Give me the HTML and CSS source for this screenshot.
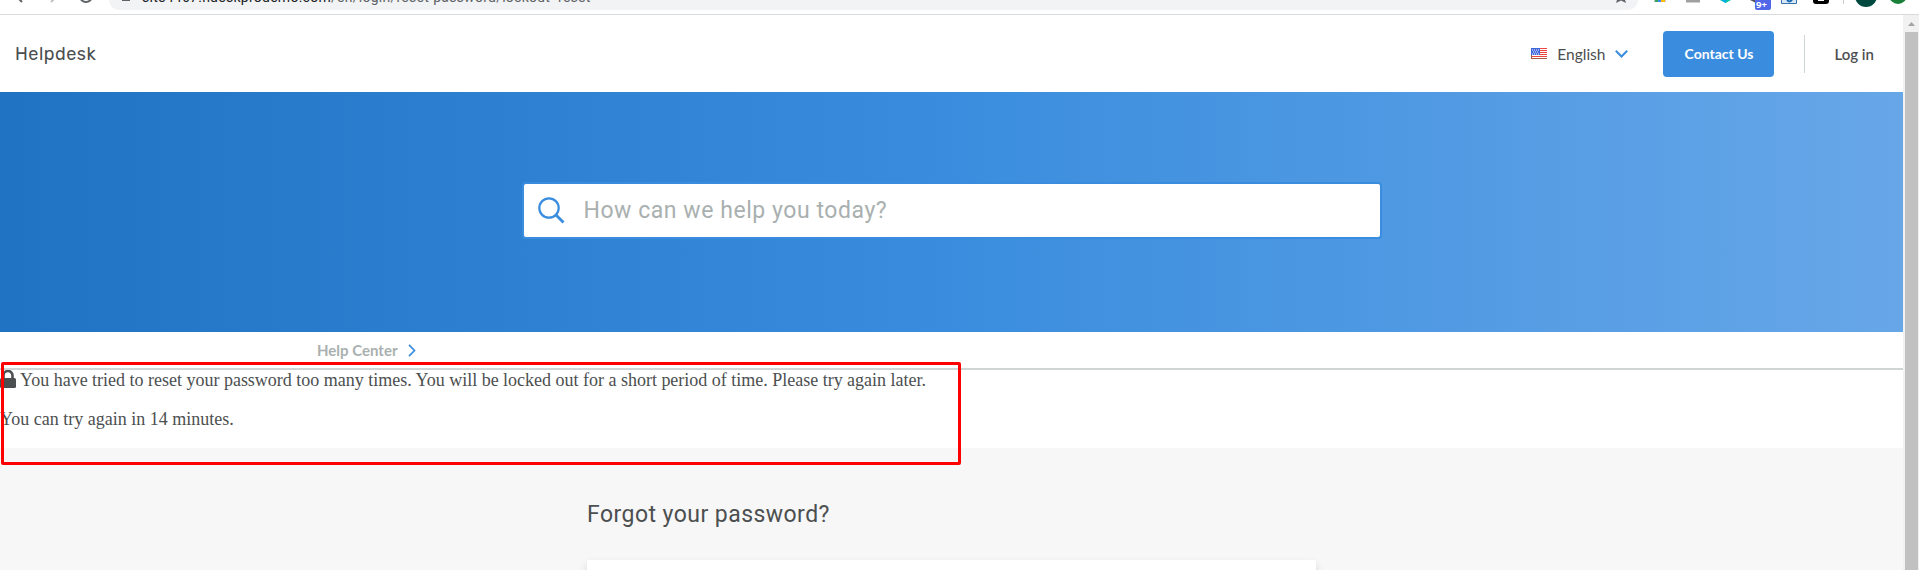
FILE: index.html
```html
<!DOCTYPE html>
<html lang="en">
<head>
<meta charset="utf-8">
<title>Helpdesk</title>
<link rel="stylesheet" href="styles.css">
</head>
<body>
<div class="chrome">
  <svg class="nav-icons" width="109" height="14" viewBox="0 0 109 14" fill="none" stroke-width="2">
    <path d="M16-4l6 6" stroke="#5f6368"/><path d="M57-4l-6 6" stroke="#bdc1c6"/><path d="M80-3a6 6 0 0 0 12 0" stroke="#5f6368" transform="translate(0 -1)"/>
  </svg>
  <div class="omnibox">
    <span class="site-lock"></span>
    <span class="url"><b>site4467.hdeskprodemo.com</b>/en/login/reset-password/lockout=reset</span>
    <svg class="star" width="12" height="4" viewBox="0 0 12 4"><path d="M2 0h8l1 3-5-2.500L1 3z" fill="#5f6368"/></svg>
  </div>
  <svg class="extensions" width="281" height="14" viewBox="0 0 281 14">
    <path d="M16 0h12v2H16z" fill="#c8c8c8"/><path d="M17 0h3v2h-3z" fill="#34a853"/><path d="M20 0h3v2h-3z" fill="#4285f4"/><path d="M23 0h4v2h-4z" fill="#fbbc04"/>
    <path d="M48 0h14v2.500H48z" fill="#a0a0a0"/>
    <path d="M82 0h11l-5.500 3z" fill="#00c5a0"/><path d="M83 0h5v3z" fill="#00a8ef"/>
    <path d="M112 0h6v3z" fill="#555"/>
    <rect x="117" y="-3" width="16" height="13" rx="2" fill="#4f67e8"/><text class="count" x="118" y="8">9+</text>
    <path d="M143.500 0v3.500h15V0" fill="#d8e7f5" stroke="#3973ad"/><path d="M149 0q3 3 5-.5" fill="none" stroke="#1769b5" stroke-width="2"/>
    <rect x="175" y="-6" width="16" height="10" rx="3" fill="#000"/><path d="M180 0h6v1h-6z" fill="#fff"/>
    <path d="M205.500 0v4" stroke="#c9cbce"/>
    <circle cx="228" cy="-4" r="11" fill="#00493f"/><circle cx="260" cy="-5" r="9" fill="#188038"/>
  </svg>
</div>
<div class="viewport">
  <div class="page">
    <header class="header">
      <a class="brand">Helpdesk</a>
      <div class="language">
        <svg width="16" height="11" viewBox="0 0 16 11"><path fill="#fff" d="M0 0h16v11H0z"/><path d="M0 .5h16M0 2.500h16M0 4.500h16M0 6.500h16M0 8.500h16M0 10.500h16" stroke="#f0443e"/><path fill="#3f66dc" d="M0 0h9v7H0z"/><path d="M1 2h7M2 4h6M1 6h7" stroke="#fff" stroke-dasharray="1 1"/><path d="M.5 7v3.500H16" fill="none" stroke="#a85b45"/></svg>
        <span>English</span>
        <svg class="caret" width="13" height="8" viewBox="0 0 13 8"><path d="M.8.8l5.700 5.700L12.200.8" fill="none" stroke="#3a8dde" stroke-width="2"/></svg>
      </div>
      <a class="contact">Contact Us</a>
      <a class="login">Log in</a>
    </header>
    <section class="hero">
      <div class="search">
        <svg width="27" height="27" viewBox="0 0 27 27" fill="none" stroke="#3a8dde"><circle cx="11" cy="11" r="9.700" stroke-width="2.200"/><path d="M18 18l7.500 7.500" stroke-width="2.800"/></svg>
        <span>How can we help you today?</span>
      </div>
    </section>
    <nav class="breadcrumb">
      <a>Help Center</a>
      <svg width="8" height="13" viewBox="0 0 8 13"><path d="M1 .8l5.500 5.700L1 12.200" fill="none" stroke="#3a8dde" stroke-width="1.700"/></svg>
    </nav>
    <div class="notice">
      <p class="lockout"><svg width="16" height="18" viewBox="0 0 16 18"><path d="M3.500 9V5.500a4.500 4.500 0 0 1 9 0V9" fill="none" stroke="#4c4f50" stroke-width="2.600"/><rect y="8" width="16" height="10" rx="1.500" fill="#4c4f50"/></svg><span>You have tried to reset your password too many times. You will be locked out for a short period of time. Please try again later.</span></p>
      <p class="retry">You can try again in 14 minutes.</p>
      <div class="highlight"></div>
    </div>
    <main class="content">
      <h1>Forgot your password?</h1>
      <div class="card"></div>
    </main>
  </div>
  <div class="scrollbar"><svg width="15" height="17" viewBox="0 0 15 17"><path d="M5 11l3.500-4 3.500 4z" fill="#a3a3a3"/></svg><div class="thumb"></div></div>
</div>
</body>
</html>
```
FILE: styles.css
```css
* { box-sizing: border-box; }
body { margin: 0; width: 1919px; height: 570px; overflow: hidden; background: #fff; color: #4c4f50; font-family: Lato, sans-serif; }
svg { display: block; flex: none; }
.chrome { display: flex; height: 15px; border-bottom: 1px solid #d9dadc; overflow: hidden; }
.omnibox { display: flex; width: 1529px; height: 10px; background: #f1f3f4; border-radius: 0 0 14px 14px; overflow: hidden; }
.site-lock { width: 8px; height: 1px; margin-left: 13px; background: #5f6368; }
.url { margin: -13px 0 0 12px; font: 14px/20px Roboto, sans-serif; letter-spacing: .26px; color: #5f6368; white-space: nowrap; }
.url b { color: #202124; font-weight: 400; }
.star { margin: 0 11px 0 auto; }
.count { font: bold 9.500px "Noto Sans", sans-serif; fill: #fff; }
.viewport { display: flex; height: 555px; }
.page { width: 1903px; display: flex; flex-direction: column; }
.header { display: flex; align-items: center; height: 77px; padding: 0 30px 0 15px; flex: none; }
.brand { font: 18px/24px Rubik, Roboto, sans-serif; letter-spacing: .5px; margin-right: auto; }
.language { display: flex; align-items: center; font-size: 15.500px; gap: 10px; }
.contact { width: 111px; height: 46px; margin-left: 35px; border-radius: 4px; background: #3a8dde; color: #fff; font-size: 14px; font-weight: 700; line-height: 46px; text-align: center; }
.login { margin-left: 30px; padding-left: 29px; border-left: 1px solid #d0d5d5; line-height: 38px; font-size: 15px; font-weight: 600; margin-right: -1px; }
.hero { display: flex; justify-content: center; align-items: center; height: 240px; flex: none; background: linear-gradient(90deg, #2072c3 0%, #3a8dde 50%, #67a7e8 100%); }
.search { display: flex; align-items: center; width: 860px; height: 57px; margin-top: -3px; padding-left: 14px; gap: 19px; border: 2px solid #3a8dde; border-radius: 4px; background: #fff; color: #a9b0b0; font: 23px Roboto, sans-serif; letter-spacing: .55px; }
.breadcrumb { display: flex; align-items: center; gap: 11px; height: 38px; padding: 0 0 0 317px; border-bottom: 2px solid #d0d5d5; flex: none; font-size: 15px; font-weight: 700; color: #a9b0b0; }
.notice { position: relative; height: 78px; flex: none; font: 18px/20px "Liberation Serif", serif; }
.notice p { margin: 0; }
.lockout { display: flex; gap: 4px; letter-spacing: -.008px; }
.retry { padding-top: 19px; }
.highlight { position: absolute; left: 1px; top: -8px; width: 960px; height: 103px; border: 3px solid #f00; border-radius: 2px; }
.content { flex: 1; padding-left: 587px; background: #f7f7f7; }
.content h1 { margin: 0; padding-top: 51px; font: 23px/32px Roboto, sans-serif; letter-spacing: .45px; }
.card { width: 729px; height: 30px; margin-top: 29px; background: #fff; box-shadow: 0 4px 8px #0002; }
.scrollbar { width: 16px; background: #f1f1f1; }
.thumb { width: 13px; height: 538px; margin-left: 2px; background: #c1c1c1; }
```
